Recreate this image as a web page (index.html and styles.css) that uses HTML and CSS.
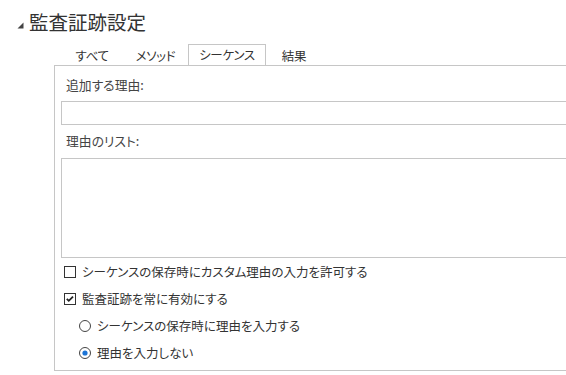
FILE: index.html
```html
<!DOCTYPE html>
<html lang="ja">
<head>
<meta charset="utf-8">
<link rel="stylesheet" href="styles.css">
</head>
<body>
<div class="page">
  <div class="header">
    <svg class="caret" width="7" height="7" viewBox="0 0 7 7"><polygon points="6.5,0.5 6.5,6.5 0.5,6.5" fill="#444"/></svg>
    <h1 class="title">監査証跡設定</h1>
  </div>
  <div class="tabs">
    <div class="tab t1">すべて</div>
    <div class="tab t2">メソッド</div>
    <div class="tab active">シーケンス</div>
    <div class="tab t4">結果</div>
  </div>
  <div class="panel">
    <div class="label">追加する理由:</div>
    <div class="input"></div>
    <div class="label label2">理由のリスト:</div>
    <div class="textarea"></div>
    <div class="row">
      <svg class="box" width="12" height="12" viewBox="0 0 12 12"><rect x="0.5" y="0.5" width="11" height="11" fill="#fff" stroke="#333"/></svg>
      <span class="text">シーケンスの保存時にカスタム理由の入力を許可する</span>
    </div>
    <div class="row">
      <svg class="box" width="12" height="12" viewBox="0 0 12 12"><rect x="0.5" y="0.5" width="11" height="11" fill="#fff" stroke="#333"/><polyline points="2.8,5.8 4.8,7.8 9,3.6" fill="none" stroke="#222" stroke-width="1.8"/></svg>
      <span class="text">監査証跡を常に有効にする</span>
    </div>
    <div class="row sub">
      <svg class="box" width="12" height="12" viewBox="0 0 12 12"><circle cx="6" cy="6" r="5.5" fill="#fff" stroke="#444"/></svg>
      <span class="text">シーケンスの保存時に理由を入力する</span>
    </div>
    <div class="row sub">
      <svg class="box" width="12" height="12" viewBox="0 0 12 12"><circle cx="6" cy="6" r="5.5" fill="#fff" stroke="#444"/><circle cx="6" cy="6" r="2.6" fill="#1b74d6"/></svg>
      <span class="text">理由を入力しない</span>
    </div>
  </div>
</div>
</body>
</html>
```

FILE: styles.css
```css
html, body {
  margin: 0;
  padding: 0;
  background: #fff;
  overflow: hidden;
}
body {
  font-family: "Noto Sans CJK JP", "Noto Sans", sans-serif;
  font-feature-settings: "palt";
  color: #333;
  font-size: 13px;
}
.page {
  width: 566px;
  height: 375px;
  overflow: hidden;
}
.header {
  display: flex;
  align-items: center;
  height: 44px;
  padding-left: 17px;
}
.caret {
  margin-top: 6px;
  margin-right: 5px;
}
.title {
  margin: 0;
  font-weight: normal;
  font-size: 19.5px;
  line-height: 24px;
  color: #333;
  margin-top: -1px;
}
.tabs {
  display: flex;
  align-items: flex-end;
  height: 21px;
  padding-left: 64px;
  position: relative;
  z-index: 1;
}
.tab {
  box-sizing: border-box;
  height: 20px;
  line-height: 19px;
  text-align: center;
  border: 1px solid transparent;
  border-bottom: none;
  color: #333;
  font-size: 12.5px;
  letter-spacing: -0.3px;
}
.t1 { width: 56px; margin-right: 4px; }
.t2 { width: 63px; margin-right: 1px; }
.tab.active {
  width: 78px;
  border-color: #c6c6c6;
  background: #fff;
  height: 21px;
  margin-right: 2px;
}
.t4 { width: 52px; }
.panel {
  margin-left: 54px;
  border-top: 1px solid #c6c6c6;
  border-left: 1px solid #c6c6c6;
  border-bottom: 1px solid #c6c6c6;
  padding: 9px 0 4px 6px;
  width: 560px;
}
.label {
  line-height: 20px;
  padding-left: 5px;
  color: #444;
  font-size: 12.8px;
}
.input {
  margin-top: 6px;
  height: 22px;
  border: 1px solid #c6c6c6;
}
.label2 {
  margin-top: 6px;
}
.textarea {
  margin-top: 7px;
  height: 98px;
  border: 1px solid #c6c6c6;
}
.row {
  display: flex;
  align-items: center;
  height: 27px;
  padding-left: 3px;
}
.row.sub {
  padding-left: 18px;
}
.box {
  flex: none;
  margin-right: 6px;
}
.text {
  color: #333;
  font-size: 12.5px;
  line-height: 18px;
}
```
